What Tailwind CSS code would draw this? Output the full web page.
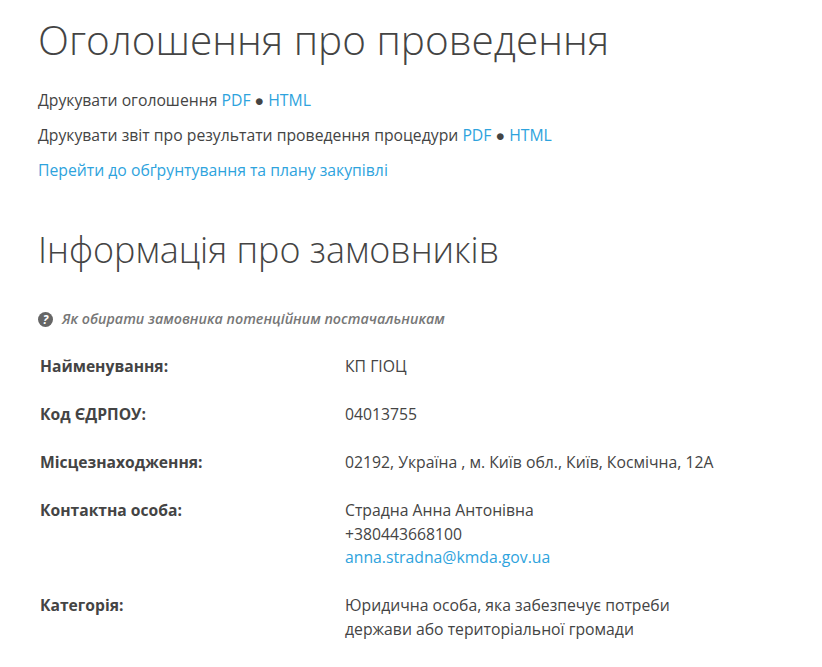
<!DOCTYPE html>
<html lang="uk">
<head>
    <meta charset="UTF-8">
    <title>Оголошення про проведення</title>
    <script src="https://cdn.jsdelivr.net/npm/@tailwindcss/browser@4"></script>
</head>
<body class="bg-white font-['Open_Sans',sans-serif] text-[15.75px] text-[#444] overflow-hidden h-[667px]">
    <div class="pl-[38px] pr-4">
        <h1 class="text-[40.5px] font-light leading-[46px] pt-[17px]">Оголошення про проведення</h1>
        <div class="mt-[25px] flex flex-col gap-[11px] leading-[24px]">
            <p>Друкувати оголошення <a class="text-[#2ea3dd]">PDF</a> ● <a class="text-[#2ea3dd]">HTML</a></p>
            <p>Друкувати звіт про результати проведення процедури <a class="text-[#2ea3dd]">PDF</a> ● <a class="text-[#2ea3dd]">HTML</a></p>
            <p><a class="text-[#2ea3dd]">Перейти до обґрунтування та плану закупівлі</a></p>
        </div>
        <h2 class="text-[35.9px] font-light leading-[40px] mt-[48px]">Інформація про замовників</h2>
        <div class="mt-[39px] flex items-center gap-[9px] text-[14.3px] italic font-semibold text-[#777] leading-[20px]">
            <svg class="w-[15px] h-[15px]" viewBox="0 0 14 14"><circle cx="7" cy="7" r="7" fill="#666"/><text x="7" y="11" text-anchor="middle" font-size="11" font-weight="700" fill="#fff" font-family="Open Sans">?</text></svg>
            <span>Як обирати замовника потенційним постачальникам</span>
        </div>
        <div class="mt-[26px] pl-[2px] grid grid-cols-[305px_440px] gap-y-[24.5px] leading-[23.5px]">
            <div class="font-bold text-[15.65px]">Найменування:</div>
            <div>КП ГІОЦ</div>
            <div class="font-bold text-[15.65px]">Код ЄДРПОУ:</div>
            <div>04013755</div>
            <div class="font-bold text-[15.65px]">Місцезнаходження:</div>
            <div>02192, Україна , м. Київ обл., Київ, Космічна, 12А</div>
            <div class="font-bold text-[15.65px]">Контактна особа:</div>
            <div>Страдна Анна Антонівна<br>+380443668100<br><a class="text-[#2ea3dd]">anna.stradna@kmda.gov.ua</a></div>
            <div class="font-bold text-[15.65px]">Категорія:</div>
            <div>Юридична особа, яка забезпечує потреби<br>держави або територіальної громади</div>
        </div>
    </div>
</body>
</html>
